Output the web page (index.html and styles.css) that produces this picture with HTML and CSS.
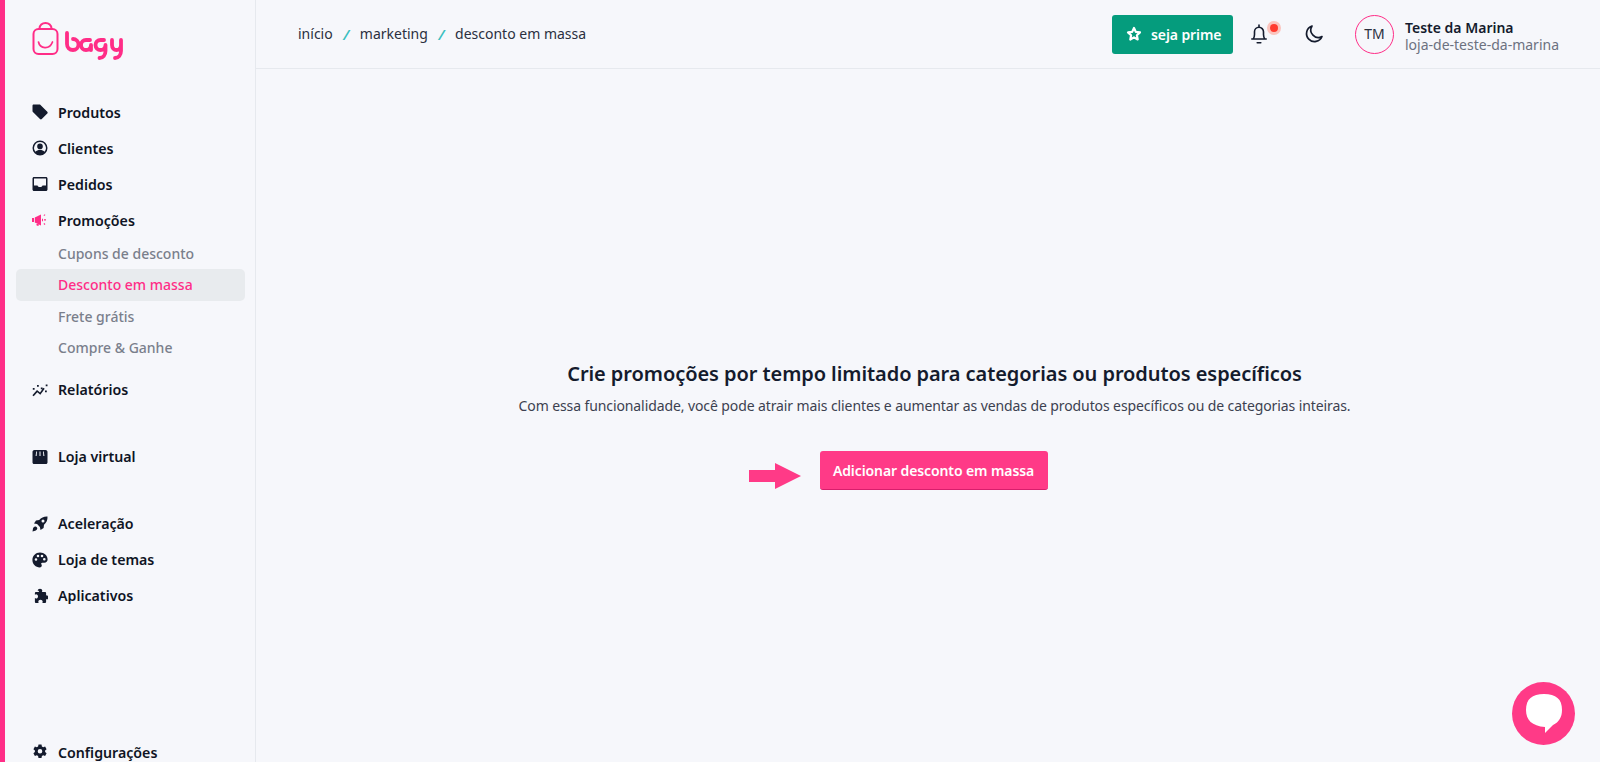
FILE: index.html
```html
<!DOCTYPE html>
<html lang="pt-BR">

<head>
    <meta charset="UTF-8">
    <meta name="viewport" content="width=device-width, initial-scale=1.0">
    <title>Desconto em massa</title>
    <link rel="stylesheet" href="styles.css">
</head>

<body>
    <div class="app">
        <aside class="sidebar">
            <div class="logo">
                <svg width="92" height="40" viewBox="0 0 92 40" fill="none" stroke="#ff2d87" stroke-linecap="round" stroke-linejoin="round">
                    <rect x="1.500" y="7" width="24" height="25" rx="5" stroke-width="2"/>
                    <path d="M7.500 7V6.500a6 5.500 0 0 1 12 0V7" stroke-width="2"/>
                    <path d="M6.500 20c1.500 7 11 8 14 0" stroke-width="1.700"/>
                    <path d="M35 11v11c0 3.500 2.500 6 6 6 3 0 5.500-2.500 5.500-5.500S44 17 41 17" stroke-width="3.800"/>
                    <path d="M58 18h-4a5 5 0 0 0 0 10c3 0 5-2 5-5v5" stroke-width="3.800"/>
                    <path d="M72 18h-3.500a5 5 0 0 0 0 10c3 0 5-2 5-5v6c0 4-2.500 7-6 7" stroke-width="3.800"/>
                    <path d="M80 18v5c0 3 2 5 4.500 5s4.500-2 4.500-5v-5 11c0 4-2.500 7-6 7" stroke-width="3.800"/>
                </svg>
            </div>

            <nav class="nav">
                <a class="nav-item">
                    <svg class="icon" viewBox="0 0 16 16"><path d="M.5 1.800C.5 1 1 .5 1.800.5h5.700c.4 0 .7.100 1 .4l6.800 6.800c.5.500.5 1.300 0 1.800l-5.500 5.500c-.5.500-1.300.5-1.800 0L.9 7.900c-.3-.3-.4-.6-.4-1z"/></svg>
                    Produtos
                </a>
                <a class="nav-item">
                    <svg class="icon" viewBox="0 0 16 16"><path fill-rule="evenodd" d="M8 .5a7.500 7.500 0 1 0 0 15 7.500 7.500 0 0 0 0-15zm0 1.600a5.900 5.900 0 0 1 4.500 9.700C11.600 10.600 10 10 8 10s-3.600.6-4.500 1.800A5.900 5.900 0 0 1 8 2.100zM8 3.600a2.800 2.800 0 1 0 0 5.600 2.800 2.800 0 0 0 0-5.600z"/></svg>
                    Clientes
                </a>
                <a class="nav-item">
                    <svg class="icon" viewBox="0 0 16 16"><path fill-rule="evenodd" d="M2 1h12c.8 0 1.500.7 1.500 1.500v11c0 .8-.7 1.500-1.500 1.500H2c-.8 0-1.500-.7-1.500-1.500v-11C.5 1.700 1.200 1 2 1zm0 1.600v6.900h3.500c.4 1 1.300 1.500 2.500 1.500s2.100-.5 2.500-1.500H14V2.600z"/></svg>
                    Pedidos
                </a>
                <a class="nav-item nav-item-open">
                    <svg class="icon icon-pink" viewBox="0 0 16 16"><path d="M0 6h2v4H0zM2.800 5.500 9 2.500v11l-6.200-3zM4 10.800h2.200l.6 3H4.800zM11.500 3.200l1.300-1 .6.800-1.300 1zM12 7.300h2v1.200h-2zM11.500 12l.6-.9 1.300 1-.6.800zM10 6.800h1v2.400h-1z"/></svg>
                    Promoções
                </a>
                <div class="subnav">
                    <a class="subnav-item">Cupons de desconto</a>
                    <a class="subnav-item subnav-item-active">Desconto em massa</a>
                    <a class="subnav-item">Frete grátis</a>
                    <a class="subnav-item">Compre &amp; Ganhe</a>
                </div>
                <a class="nav-item">
                    <svg class="icon" viewBox="0 0 16 16"><path d="M.4 13.200 5 8l3 2.400 3.400-4.700 1.300 1-4.400 6-3-2.400-3.600 4zM.8 6h1.800v1.800H.8zM5 3h1.800v1.800H5zM8.800 5.500h1.800v1.800H8.800zM13.700 2.500h1.800v1.800h-1.800zM13 8.500h1.800v1.800H13z"/></svg>
                    Relatórios
                </a>

                <a class="nav-item nav-group">
                    <svg class="icon" viewBox="0 0 16 16"><path fill-rule="evenodd" d="M2.500 1h11C15 1 15.500 2 15.500 3v10.500c0 .8-.7 1.500-1.500 1.500H2c-.8 0-1.500-.7-1.500-1.500V3C.5 2 1 1 2.500 1zM4.200 2.500 3.600 7h1l.4-4.500zm3.300 0V7h1V2.500zm3.500 0 .4 4.500h1l-.6-4.500z"/></svg>
                    Loja virtual
                </a>

                <a class="nav-item nav-group">
                    <svg class="icon" viewBox="0 0 16 16"><path fill-rule="evenodd" d="M15.500.5c.2 3.500-1 6.200-3.500 8.300l-.4 3.200L8.500 14l-.6-3.100-2.800-2.800L2 7.500 4 4.400l3.200-.4C9.300 1.500 12 .3 15.500.5zM11 3.500a1.500 1.500 0 1 0 0 3 1.500 1.500 0 0 0 0-3zM1 12.500c.5-1.500 1.500-2.200 2.500-2s1.800 1 1.800 1.900c0 1.500-2.300 2.600-4.800 3z"/></svg>
                    Aceleração
                </a>
                <a class="nav-item">
                    <svg class="icon" viewBox="0 0 16 16"><path fill-rule="evenodd" d="M8 .6C3.700.6.400 3.800.4 8s3.400 7.400 7.300 7.400c1.400 0 2.100-.9 2.100-1.900 0-.6-.3-1-.5-1.400-.3-.5-.2-1.400 1-1.400h2c1.900 0 3.300-1.300 3.300-3.200C15.600 3.600 12.200.6 8 .6zM4 8.800a1.300 1.300 0 1 1 0-2.600 1.300 1.300 0 0 1 0 2.600zM6 5.300a1.300 1.300 0 1 1 0-2.600 1.300 1.300 0 0 1 0 2.600zm4 0a1.300 1.300 0 1 1 0-2.600 1.300 1.300 0 0 1 0 2.600zm2.300 3.200a1.300 1.300 0 1 1 0-2.600 1.300 1.300 0 0 1 0 2.600z"/></svg>
                    Loja de temas
                </a>
                <a class="nav-item">
                    <svg class="icon" viewBox="0 0 16 16"><path d="M5.700 2.700C5.700 1.500 6.700.7 8 .7s2.300.8 2.300 2c0 .6-.3 1-.5 1.300h3.400c.5 0 .9.400.9.900v2.900c.4-.3.800-.5 1.100-.4.700.1 1 1 1 2.100s-.4 2-1.200 2c-.4 0-.6-.2-.9-.4v3c0 .5-.4.900-.9.900h-3c.3-.4.500-.8.500-1.300 0-1.100-1-1.900-2.200-1.900s-2.200.8-2.200 1.900c0 .5.200.9.500 1.300h-3c-.5 0-.9-.4-.9-.9V10c.4.300.7.500 1.200.5 1.100 0 1.900-.9 1.900-2.100s-.8-2.200-1.900-2.200c-.5 0-.8.200-1.200.5V4.900c0-.5.400-.9.900-.9h3.400c-.2-.3-.5-.7-.5-1.300z"/></svg>
                    Aplicativos
                </a>

                <a class="nav-item nav-bottom">
                    <svg class="icon" viewBox="0 0 16 16"><path fill-rule="evenodd" d="M6.500.6h3l.4 2 1.300.7 1.900-.7 1.500 2.600-1.500 1.300v1.500l1.500 1.300-1.500 2.600-1.900-.7-1.300.7-.4 2h-3l-.4-2-1.300-.7-1.900.7L1.400 9.300l1.500-1.300V6.500L1.400 5.200l1.500-2.600 1.900.7 1.300-.7zM8 5a2.300 2.300 0 1 0 0 4.600A2.300 2.300 0 0 0 8 5z"/></svg>
                    Configurações
                </a>
            </nav>
        </aside>

        <div class="content">
            <header class="topbar">
                <div class="crumbs">
                    <span>início</span>
                    <i>/</i>
                    <span>marketing</span>
                    <i>/</i>
                    <span>desconto em massa</span>
                </div>

                <a class="prime">
                    <svg width="16" height="16" viewBox="0 0 16 16" fill="none" stroke="#fff" stroke-width="2.200" stroke-linejoin="round"><path d="M8 2l1.800 3.900 4.200.5-3.100 2.900.8 4.200L8 11.400l-3.700 2.100.8-4.200L2 6.400l4.200-.5z"/></svg>
                    seja prime
                </a>

                <div class="bell">
                    <svg width="16" height="20" viewBox="0 0 16 20" fill="none" stroke="#141b2d" stroke-width="1.600" stroke-linecap="round" stroke-linejoin="round"><path d="M2.200 15c1-1.300 1.300-2.500 1.300-4.500V7.800a4.500 4.500 0 0 1 9 0v2.700c0 2 .3 3.200 1.300 4.500zM.8 15h14.400M6.200 18.800h3.600M8 1v2.200"/></svg>
                    <span class="dot"></span>
                </div>

                <svg class="moon" width="22" height="22" viewBox="0 0 22 22" fill="none" stroke="#141b2d" stroke-width="1.700" stroke-linejoin="round"><path d="M9 3a8 8 0 1 0 10 10.500A7.500 7.500 0 0 1 9 3z"/></svg>

                <div class="avatar">TM</div>
                <div class="user">
                    <strong>Teste da Marina</strong>
                    <span>loja-de-teste-da-marina</span>
                </div>
            </header>

            <main class="main">
                <h1>Crie promoções por tempo limitado para categorias ou produtos específicos</h1>
                <p>Com essa funcionalidade, você pode atrair mais clientes e aumentar as vendas de produtos específicos ou de categorias inteiras.</p>
                <div class="action">
                    <svg class="arrow" width="52" height="28" viewBox="0 0 52 28"><path d="M0 8h26V1l26 13-26 13v-7H0z" fill="#ff3a87"/></svg>
                    <button class="add">Adicionar desconto em massa</button>
                </div>
            </main>
        </div>
    </div>

    <a class="chat">
        <svg width="38" height="42" viewBox="0 0 38 42"><path d="M19 1C7 1 1 6 1 17c0 10 6 16 19 17v6l8-8c6-3 9-8 9-15C37 6 31 1 19 1z" fill="#fff"/></svg>
    </a>
</body>

</html>
```

FILE: styles.css
```css
* {
    margin: 0;
    padding: 0;
    box-sizing: border-box;
}

html,
body {
    height: 100%;
    overflow: hidden;
}

body {
    background: #f6f7fb;
    color: #141b2d;
    font-family: "Noto Sans", "Open Sans", sans-serif;
    font-size: 14px;
}

.app {
    display: flex;
    height: 762px;
    border-left: 5px solid #ff2d87;
}

.sidebar {
    width: 251px;
    flex-shrink: 0;
    display: flex;
    flex-direction: column;
    border-right: 1px solid #e6e9ee;
}

.logo {
    height: 94px;
    padding: 22px 0 0 27px;
}

.nav {
    flex: 1;
    display: flex;
    flex-direction: column;
    padding-left: 11px;
    padding-right: 10px;
}

.nav-item {
    display: flex;
    align-items: center;
    gap: 10px;
    height: 36px;
    padding-left: 16px;
    font-size: 14.2px;
    font-weight: 600;
    color: #0f1424;
}

.nav-group {
    margin-top: 31px;
}

.nav-bottom {
    margin-top: auto;
    margin-bottom: -8px;
}

.icon {
    width: 16px;
    height: 16px;
    fill: #141b2d;
    flex-shrink: 0;
}

.icon-pink {
    fill: #ff2d87;
}

.subnav {
    display: flex;
    flex-direction: column;
    margin-bottom: 8px;
}

.subnav-item {
    height: 32px;
    line-height: 31px;
    margin-bottom: -.6px;
    padding-left: 42px;
    color: #7a7f8c;
    font-weight: 500;
}

.subnav-item-active {
    background: #e8ebee;
    border-radius: 5px;
    color: #ff2d87;
}

.content {
    flex: 1;
    display: flex;
    flex-direction: column;
}

.topbar {
    height: 69px;
    flex-shrink: 0;
    display: flex;
    align-items: center;
    border-bottom: 1px solid #e6e9ee;
    padding: 0 41px 0 42px;
}

.crumbs {
    flex: 1;
    display: flex;
    gap: 10.6px;
    color: #2b3040;
}

.crumbs i {
    color: #3bbfbf;
    font-weight: 600;
    font-size: 15px;
}

.prime {
    display: flex;
    align-items: center;
    gap: 9px;
    width: 121px;
    height: 39px;
    padding-left: 14px;
    background: #059c7d;
    border-radius: 3px;
    color: #fff;
    font-weight: 600;
    letter-spacing: -.1px;
}

.bell {
    position: relative;
    display: flex;
    margin: 0 2px 0 18px;
}

.dot {
    position: absolute;
    top: -3px;
    left: 16px;
    width: 14px;
    height: 14px;
    border: 3px solid #fbc4bd;
    border-radius: 50%;
    background: #ff3b2f;
}

.moon {
    margin-left: 34px;
}

.avatar {
    width: 39px;
    height: 39px;
    margin-left: 30px;
    border: 1.7px solid #ff2d87;
    border-radius: 50%;
    text-align: center;
    line-height: 36px;
    color: #2b3040;
}

.user {
    display: flex;
    flex-direction: column;
    margin: 3px 0 0 11px;
    line-height: 17px;
}

.user strong {
    font-weight: 600;
}

.user span {
    color: #6c7180;
}

.main {
    flex: 1;
    display: flex;
    flex-direction: column;
    align-items: center;
    padding: 291px 0 0 13px;
}

.main h1 {
    font-size: 20px;
    font-weight: 600;
    line-height: 27px;
    letter-spacing: -.07px;
}

.main p {
    margin-top: 9px;
    line-height: 20px;
    color: #3c4150;
    letter-spacing: -.1px;
}

.action {
    position: relative;
    margin: 35px 2px 0 0;
}

.arrow {
    position: absolute;
    top: 11px;
    left: -71px;
}

.add {
    display: block;
    width: 228px;
    height: 39px;
    background: #ff3a87;
    border: 0;
    border-bottom: 1px solid #d81e6c;
    border-radius: 3px;
    color: #fff;
    font-family: inherit;
    font-size: 14px;
    font-weight: 600;
    letter-spacing: -.1px;
}

.chat {
    position: fixed;
    right: 25px;
    bottom: 17px;
    width: 63px;
    height: 63px;
    display: flex;
    align-items: center;
    justify-content: center;
    background: #ff3a87;
    border-radius: 50%;
}
```
